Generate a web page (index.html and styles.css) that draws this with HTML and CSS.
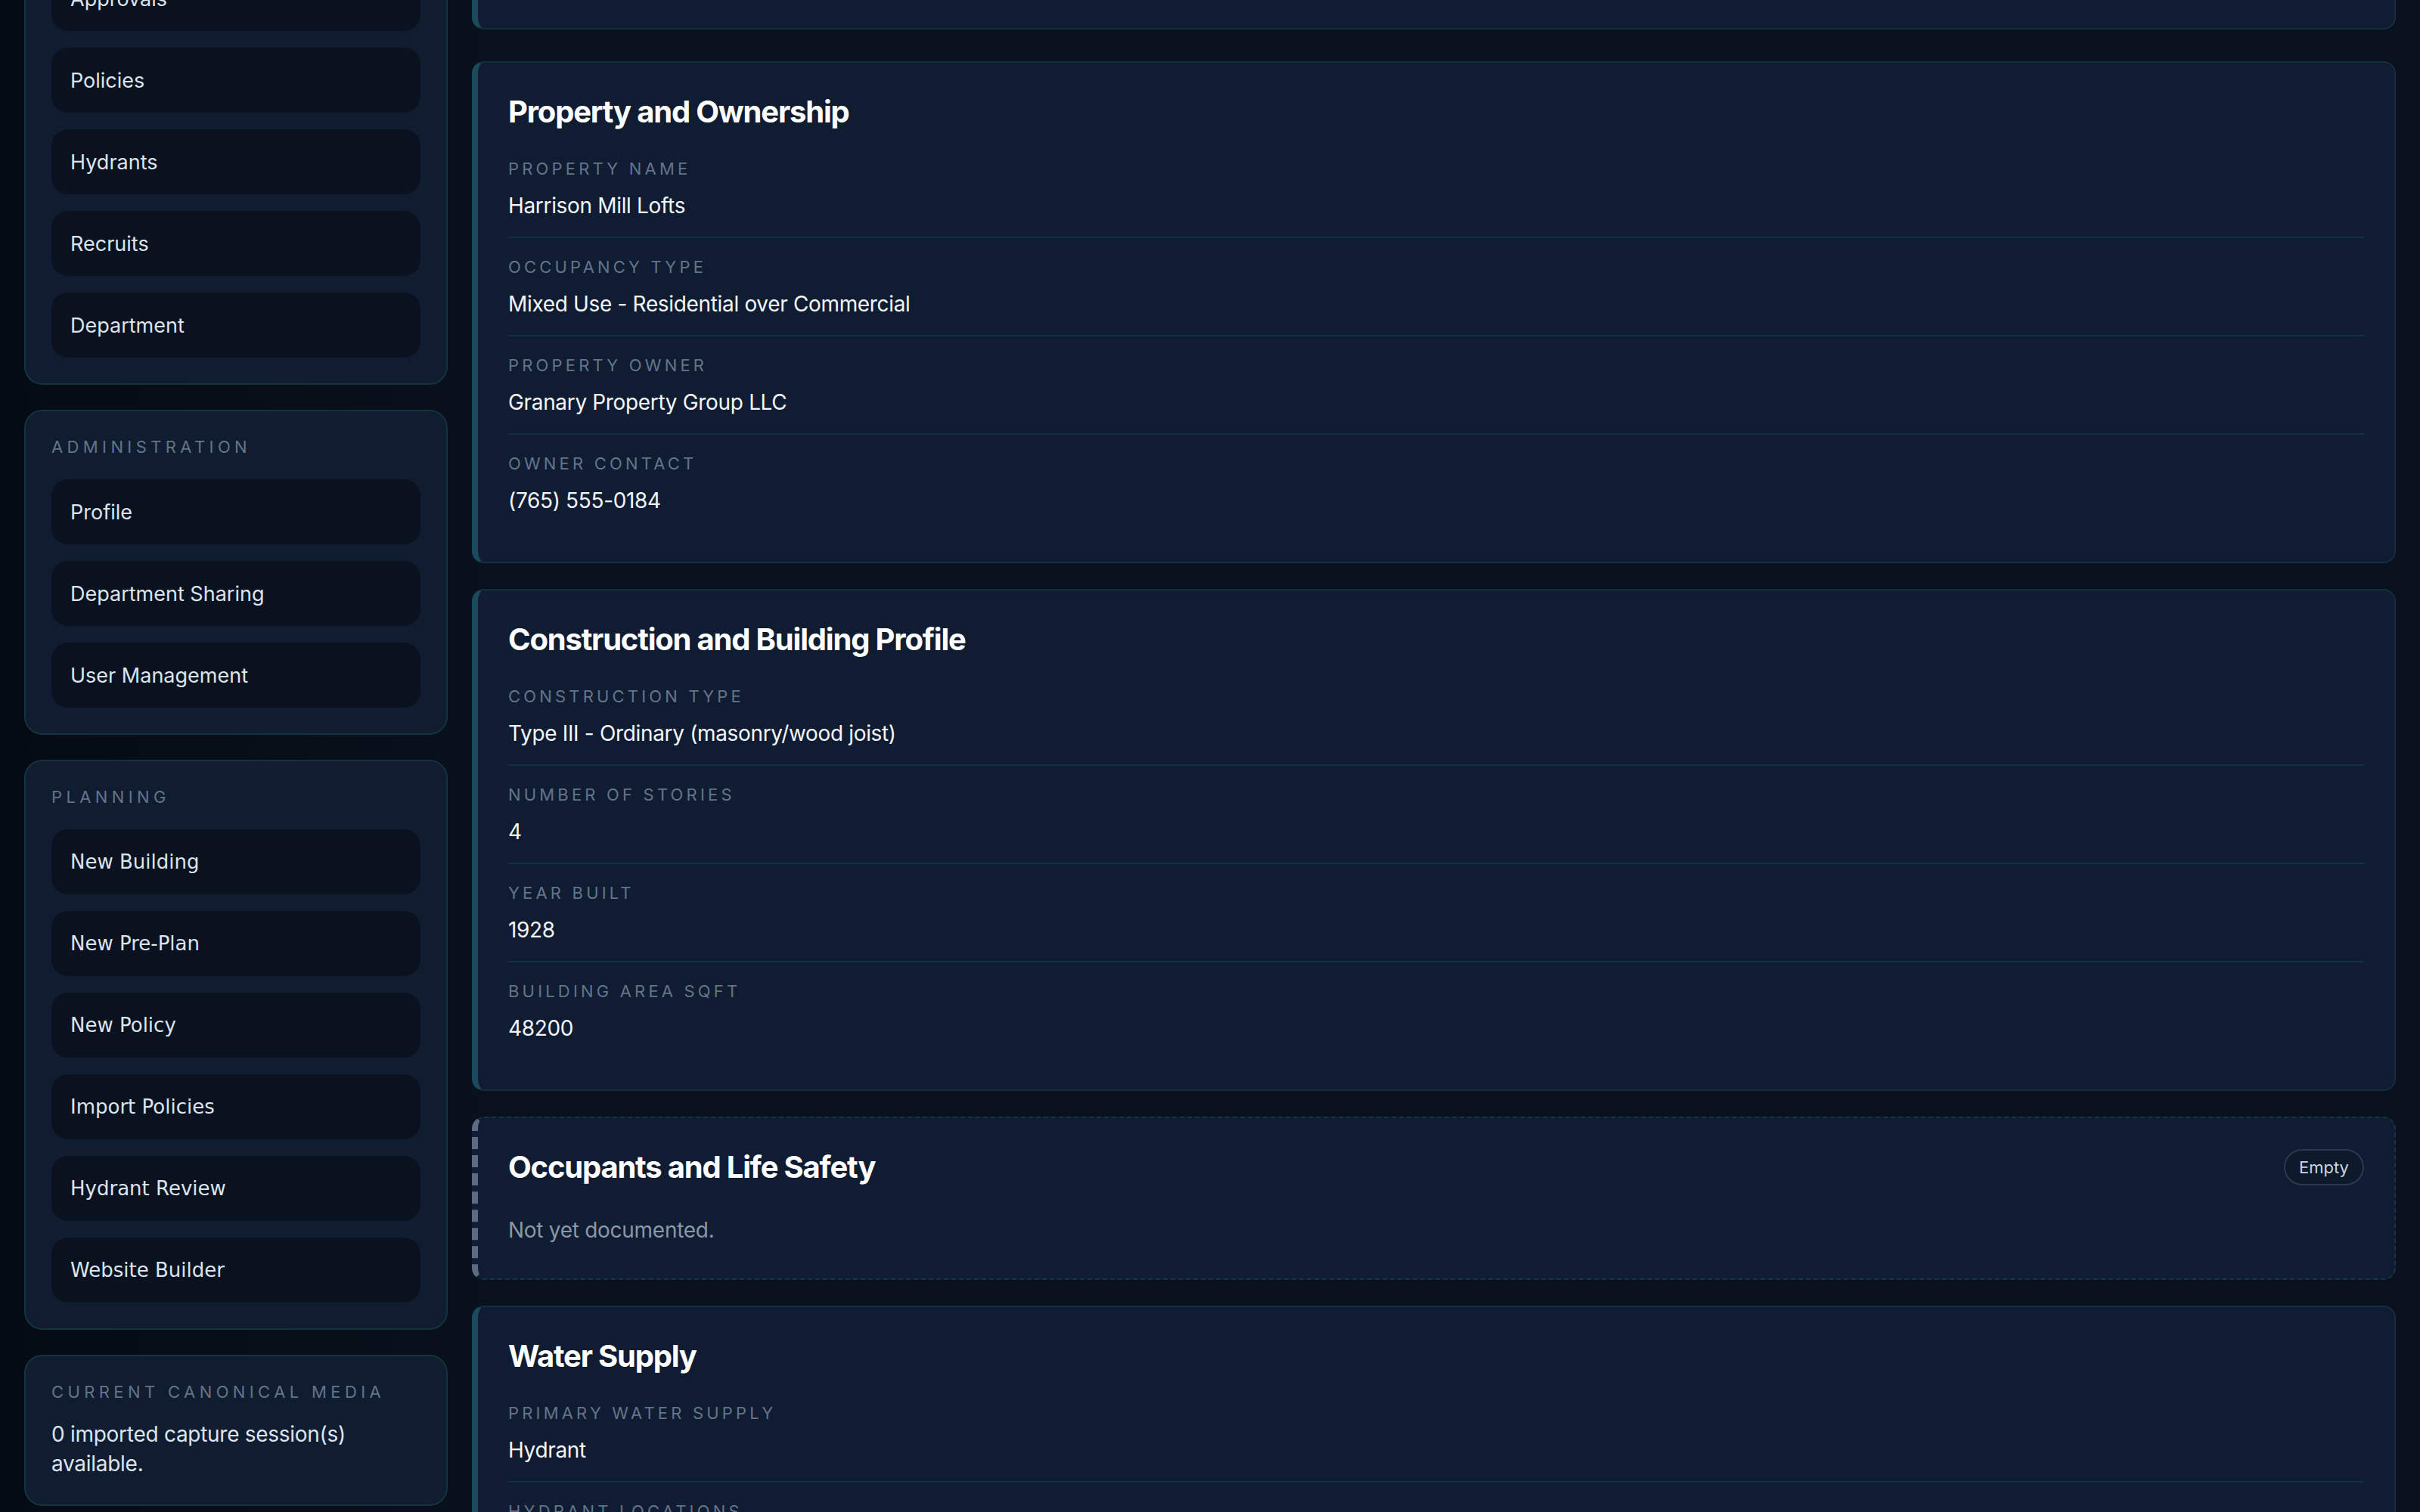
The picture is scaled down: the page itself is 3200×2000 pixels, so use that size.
FILE: index.html
```html
<!DOCTYPE html>
<html lang="en">
<head>
    <meta charset="UTF-8">
    <meta name="viewport" content="width=device-width, initial-scale=1.0">
    <title>Harrison Mill Lofts - Pre-Plan</title>
    <link rel="stylesheet" href="styles.css">
</head>
<body>

<div class="layout">
    <!-- Sidebar -->
    <aside class="sidebar">
        <nav class="side-card">
            <div class="side-label">Workspace</div>
            <a class="side-link" href="#">Dashboard</a>
            <a class="side-link" href="#">Buildings</a>
            <a class="side-link" href="#">Approvals</a>
            <a class="side-link" href="#">Policies</a>
            <a class="side-link" href="#">Hydrants</a>
            <a class="side-link" href="#">Recruits</a>
            <a class="side-link" href="#">Department</a>
        </nav>

        <nav class="side-card">
            <div class="side-label">Administration</div>
            <a class="side-link" href="#">Profile</a>
            <a class="side-link" href="#">Department Sharing</a>
            <a class="side-link" href="#">User Management</a>
        </nav>

        <nav class="side-card">
            <div class="side-label">Planning</div>
            <button class="side-action" type="button">New Building</button>
            <button class="side-action" type="button">New Pre-Plan</button>
            <button class="side-action" type="button">New Policy</button>
            <button class="side-action" type="button">Import Policies</button>
            <button class="side-action" type="button">Hydrant Review</button>
            <button class="side-action" type="button">Website Builder</button>
        </nav>

        <div class="side-card">
            <div class="side-label">Current canonical media</div>
            <p class="side-text">0 imported capture session(s) available.</p>
        </div>
    </aside>

    <!-- Pre-plan sections -->
    <main class="sections">
        <section class="card card-summary">
            <h2>Harrison Mill Lofts</h2>
            <div class="field">
                <div class="field-label">Address</div>
                <div class="field-value">412 Harrison St</div>
            </div>
        </section>

        <section class="card">
            <h2>Property and Ownership</h2>
            <div class="field">
                <div class="field-label">Property name</div>
                <div class="field-value">Harrison Mill Lofts</div>
            </div>
            <div class="field">
                <div class="field-label">Occupancy type</div>
                <div class="field-value">Mixed Use - Residential over Commercial</div>
            </div>
            <div class="field">
                <div class="field-label">Property owner</div>
                <div class="field-value">Granary Property Group LLC</div>
            </div>
            <div class="field">
                <div class="field-label">Owner contact</div>
                <div class="field-value">(765) 555-0184</div>
            </div>
        </section>

        <section class="card">
            <h2>Construction and Building Profile</h2>
            <div class="field">
                <div class="field-label">Construction type</div>
                <div class="field-value">Type III - Ordinary (masonry/wood joist)</div>
            </div>
            <div class="field">
                <div class="field-label">Number of stories</div>
                <div class="field-value">4</div>
            </div>
            <div class="field">
                <div class="field-label">Year built</div>
                <div class="field-value">1928</div>
            </div>
            <div class="field">
                <div class="field-label">Building area sqft</div>
                <div class="field-value">48200</div>
            </div>
        </section>

        <section class="card card-empty">
            <div class="card-head">
                <h2>Occupants and Life Safety</h2>
                <span class="badge">Empty</span>
            </div>
            <p class="empty-note">Not yet documented.</p>
        </section>

        <section class="card">
            <h2>Water Supply</h2>
            <div class="field">
                <div class="field-label">Primary water supply</div>
                <div class="field-value">Hydrant</div>
            </div>
            <div class="field">
                <div class="field-label">Hydrant locations</div>
                <div class="field-value">NE corner of Harrison St and 4th Ave</div>
            </div>
        </section>
    </main>
</div>

</body>
</html>
```

FILE: styles.css
```css
body {
    margin: 0;
    padding: 0 32px;
    font-family: Inter, "Noto Sans", sans-serif;
    color: #e6edf5;
    background: linear-gradient(90deg, #050b14 0, #08111c 20%, #08111c 100%);
    min-height: 100vh;
    overflow: hidden;
}

/* page is shown scrolled down, so the top of the layout sits above the fold */
.layout {
    display: grid;
    grid-template-columns: 560px 1fr;
    gap: 32px;
    align-items: start;
    margin-top: -353px;
}

/* ---------- sidebar ---------- */
.sidebar {
    display: flex;
    flex-direction: column;
    gap: 33px;
}
.side-card {
    display: flex;
    flex-direction: column;
    gap: 22px;
    padding: 34px;
    background-color: #101c30;
    border: 2px solid #14333f;
    border-radius: 24px;
}
.side-label {
    font-size: 22px;
    line-height: 26px;
    letter-spacing: 0.245em;
    text-transform: uppercase;
    color: #64748b;
    margin-bottom: 8px;
}
.side-link, .side-action {
    display: flex;
    align-items: center;
    height: 86px;
    padding: 0 25px;
    box-sizing: border-box;
    background-color: #0a1220;
    border: none;
    border-radius: 22px;
    color: #dbe4ef;
    text-decoration: none;
    font-family: Inter, "Noto Sans", sans-serif;
    font-size: 27px;
    text-align: left;
}
.side-action {
    font-family: "DejaVu Sans", Verdana, sans-serif;
    font-size: 26px;
    cursor: pointer;
}
.side-text {
    margin: -6px 0 0;
    font-size: 28px;
    line-height: 39px;
    letter-spacing: -0.01em;
    color: #dbe4ef;
}

/* ---------- sections ---------- */
.sections {
    display: flex;
    flex-direction: column;
    gap: 34px;
}
.card {
    padding: 40px;
    background-color: #101c31;
    border: 2px solid #122f40;
    border-left: 8px solid #1a4a5c;
    border-radius: 16px;
}
.card-summary {
    min-height: 392px;
    box-sizing: border-box;
    margin-bottom: 8px;
}
.card h2 {
    margin: 0 0 12px;
    font-size: 40px;
    line-height: 50px;
    font-weight: 700;
    letter-spacing: -0.03em;
    color: #ffffff;
}
.field {
    padding: 24px 0 21px;
    border-bottom: 2px solid #133043;
}
.field:last-child {
    border-bottom: none;
}
.field-label {
    font-size: 22px;
    line-height: 28px;
    letter-spacing: 0.19em;
    text-transform: uppercase;
    color: #64748b;
    margin-bottom: 15px;
}
.field-value {
    font-size: 28px;
    line-height: 40px;
    letter-spacing: -0.012em;
    color: #f3f6fa;
}

/* empty section */
.card-empty {
    padding-bottom: 44px;
    border: 2px dashed #173447;
    border-left: 8px dashed #5d6b80;
}
.card-head {
    display: flex;
    justify-content: space-between;
    align-items: center;
}
.card-head h2 {
    margin-bottom: 0;
}
.badge {
    padding: 8px 18px;
    font-size: 22px;
    line-height: 28px;
    color: #cbd5e1;
    border: 2px solid #2a3a50;
    border-radius: 999px;
    background-color: #0e192b;
}
.empty-note {
    margin: 38px 0 0;
    font-size: 28px;
    line-height: 40px;
    letter-spacing: -0.01em;
    color: #8a97aa;
}
```
